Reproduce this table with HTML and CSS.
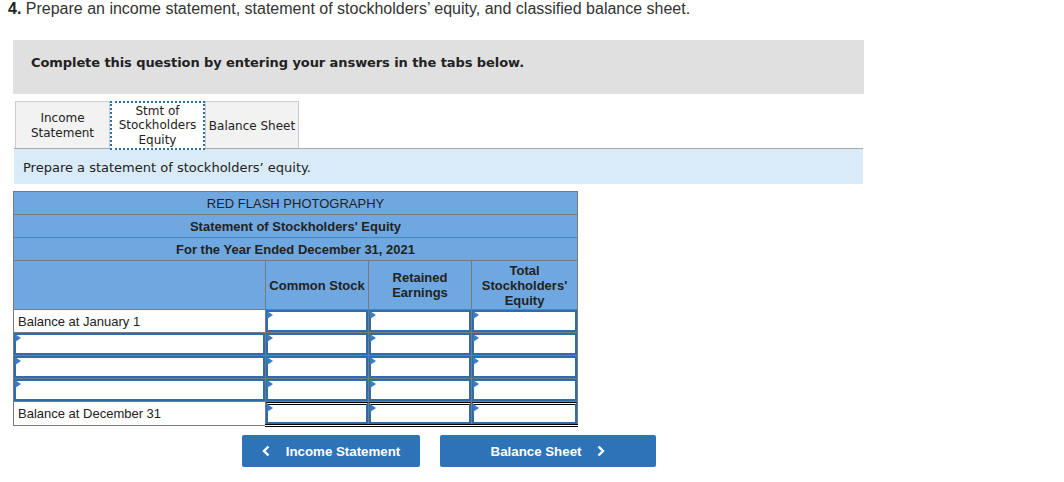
FILE: index.html
```html
<!DOCTYPE html>
<html>
<head>
<meta charset="utf-8">
<link rel="stylesheet" href="styles.css">
</head>
<body>
<p class="question"><b>4.</b> Prepare an income statement, statement of stockholders’ equity, and classified balance sheet.</p>
<div class="instructions">Complete this question by entering your answers in the tabs below.</div>
<div class="tabs">
  <div class="tab">Income<br>Statement</div>
  <div class="tab active">Stmt of<br>Stockholders<br>Equity</div>
  <div class="tab">Balance Sheet</div>
</div>
<div class="prompt">Prepare a statement of stockholders’ equity.</div>
<table class="stmt">
  <colgroup><col class="c-label"><col class="c-num"><col class="c-num"><col class="c-tot"></colgroup>
  <tr class="hd"><td colspan="4">RED FLASH PHOTOGRAPHY</td></tr>
  <tr class="hd b"><td colspan="4">Statement of Stockholders' Equity</td></tr>
  <tr class="hd b"><td colspan="4">For the Year Ended December 31, 2021</td></tr>
  <tr class="colhd"><td></td><td>Common Stock</td><td>Retained<br>Earnings</td><td>Total<br>Stockholders'<br>Equity</td></tr>
  <tr><td class="lbl">Balance at January 1</td><td class="in"><div class="box"></div></td><td class="in"><div class="box"></div></td><td class="in"><div class="box"></div></td></tr>
  <tr><td class="in"><div class="box"></div></td><td class="in"><div class="box"></div></td><td class="in"><div class="box"></div></td><td class="in"><div class="box"></div></td></tr>
  <tr><td class="in"><div class="box"></div></td><td class="in"><div class="box"></div></td><td class="in"><div class="box"></div></td><td class="in"><div class="box"></div></td></tr>
  <tr><td class="in"><div class="box"></div></td><td class="in"><div class="box"></div></td><td class="in"><div class="box"></div></td><td class="in"><div class="box"></div></td></tr>
  <tr class="total"><td class="lbl">Balance at December 31</td><td class="in"><div class="box"></div></td><td class="in"><div class="box"></div></td><td class="in"><div class="box"></div></td></tr>
</table>
<div class="nav">
  <div class="btn prev"><svg class="chev" width="8" height="12" viewBox="0 0 8 12"><polyline points="6.5,1.5 2,6 6.5,10.5" fill="none" stroke="#fff" stroke-width="2.4"/></svg>Income Statement</div>
  <div class="btn next">Balance Sheet<svg class="chev" width="8" height="12" viewBox="0 0 8 12"><polyline points="1.5,1.5 6,6 1.5,10.5" fill="none" stroke="#fff" stroke-width="2.4"/></svg></div>
</div>
</body>
</html>
```
FILE: styles.css
```css
body {
  margin: 0;
  padding: 0 8px;
  font-family: "Liberation Sans", Arial, sans-serif;
  color: #222;
  background: #fff;
}
.question {
  margin: 0;
  padding-top: 0;
  font-size: 16px;
  line-height: 18px;
  color: #333;
}
.question b { color: #222; }
.instructions {
  margin: 22px 0 0 5px;
  width: 851px;
  height: 54px;
  box-sizing: border-box;
  background: #e0e0e0;
  padding: 15px 0 0 18px;
  font-family: "DejaVu Sans", Verdana, sans-serif;
  font-weight: bold;
  font-size: 13px;
  letter-spacing: -0.08px;
  line-height: 16px;
  color: #222;
}
.tabs {
  display: flex;
  margin: 7px 0 0 7px;
  height: 47px;
}
.tab {
  box-sizing: border-box;
  height: 47px;
  padding-top: 2px;
  display: flex;
  align-items: center;
  justify-content: center;
  text-align: center;
  background: #f2f2f2;
  border: 1px solid #ccc;
  border-bottom: none;
  font-family: "DejaVu Sans", Verdana, sans-serif;
  font-size: 12px;
  letter-spacing: 0;
  line-height: 15px;
  color: #222;
}
.tab:nth-child(1) { width: 95px; }
.tab:nth-child(2) { width: 95px; }
.tab:nth-child(3) { width: 94px; }
.tab.active {
  background: #fff;
  border: 2px dotted #2e6da4;
  border-bottom: 2px dotted #2e6da4;
  height: 49px;
  padding-top: 0;
  line-height: 14.5px;
}
.prompt {
  margin-left: 6px;
  width: 849px;
  height: 36px;
  box-sizing: border-box;
  background: #d9ebf8;
  border-top: 1px solid #aaa;
  padding: 11px 0 0 9px;
  font-family: "DejaVu Sans", Verdana, sans-serif;
  font-size: 13px;
  letter-spacing: 0;
  line-height: 16px;
  color: #222;
}
.stmt {
  margin: 7px 0 0 5px;
  border-collapse: collapse;
  table-layout: fixed;
  width: 564px;
  font-size: 13px;
  color: #222;
}
.c-label { width: 252px; }
.c-num { width: 103px; }
.c-tot { width: 106px; }
.stmt td {
  border: 1px solid #7a7a7a;
  height: 22px;
  padding: 0;
  box-sizing: border-box;
}
.hd td {
  background: #6fa8e0;
  text-align: center;
  height: 23px;
}
.hd.b td { font-weight: bold; }
.colhd td {
  background: #6fa8e0;
  text-align: center;
  font-weight: bold;
  height: 49px;
  line-height: 15px;
}
.lbl {
  padding-left: 4px !important;
  background: #fff;
}
.in { position: relative; }
.box {
  height: 22px;
  box-sizing: border-box;
  border: 2px solid #2e6dad;
  background: #fff;
  position: relative;
}
.box::before {
  content: "";
  position: absolute;
  left: -1px;
  top: -1px;
  border-left: 6px solid #3a7dc4;
  border-top: 4px solid transparent;
  border-bottom: 4px solid transparent;
}
.total .in .box {
  border-top: 3px double #000;
}
.total .in {
  border-bottom: 3px double #000;
}
.nav {
  display: flex;
  gap: 20px;
  margin: 8px 0 0 234px;
}
.btn {
  height: 32px;
  box-sizing: border-box;
  background: #2e73b7;
  border-radius: 2px;
  color: #fff;
  font-weight: bold;
  font-size: 13.3px;
  display: flex;
  align-items: center;
  justify-content: center;
  gap: 16px;
}
.btn.prev { width: 178px; }
.btn.next { width: 216px; }
.chev { display: block; }
```
